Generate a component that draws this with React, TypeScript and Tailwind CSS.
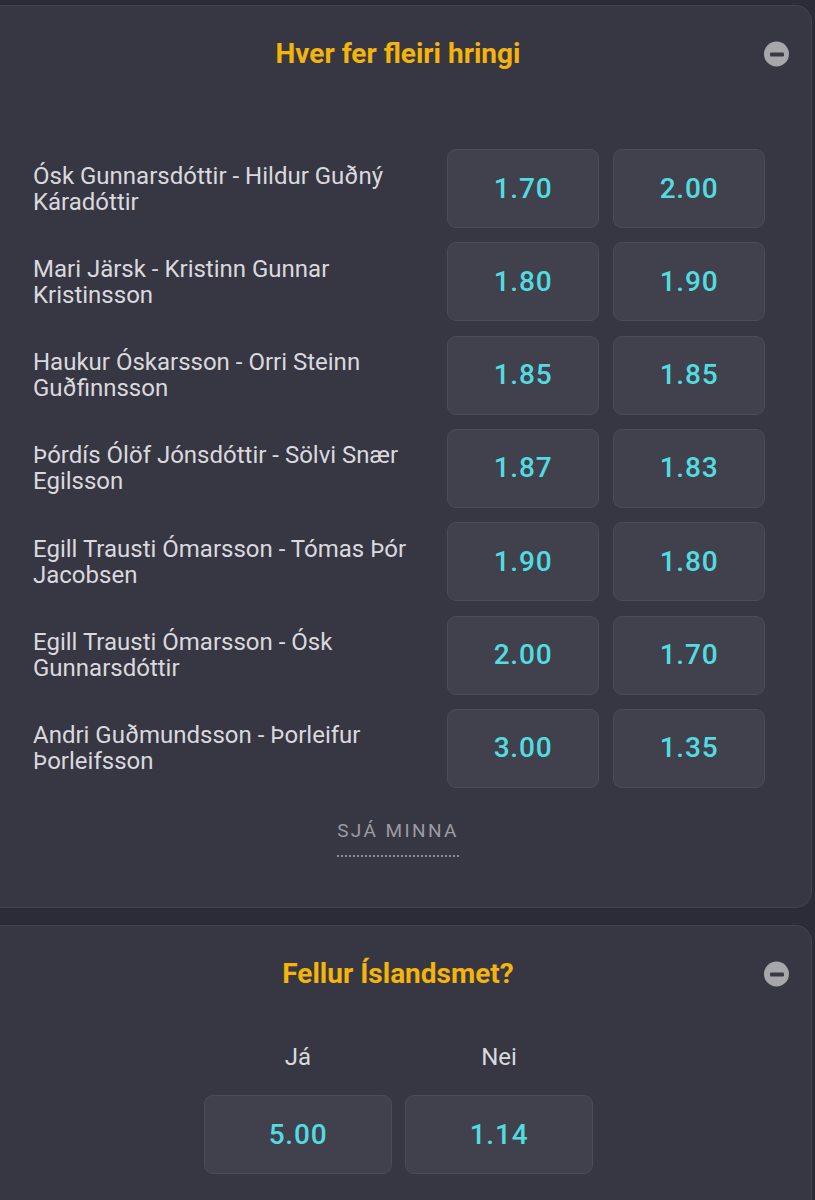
import React from "react";

const rows: [string, string, string][] = [
  ["Ósk Gunnarsdóttir - Hildur Guðný Káradóttir", "1.70", "2.00"],
  ["Mari Järsk - Kristinn Gunnar Kristinsson", "1.80", "1.90"],
  ["Haukur Óskarsson - Orri Steinn Guðfinnsson", "1.85", "1.85"],
  ["Þórdís Ólöf Jónsdóttir - Sölvi Snær Egilsson", "1.87", "1.83"],
  ["Egill Trausti Ómarsson - Tómas Þór Jacobsen", "1.90", "1.80"],
  ["Egill Trausti Ómarsson - Ósk Gunnarsdóttir", "2.00", "1.70"],
  ["Andri Guðmundsson - Þorleifur Þorleifsson", "3.00", "1.35"],
];

function MinusIcon() {
  return (
    <div className="absolute right-[22px] top-1/2 -translate-y-1/2 w-[25px] h-[25px] rounded-full bg-[#a6a6ab] flex items-center justify-center">
      <div className="w-[14px] h-[4px] rounded-[1px] bg-[#3a3a45]" />
    </div>
  );
}

function Odd({ v, w }: { v: string; w: string }) {
  return (
    <div
      className={`${w} h-[79px] rounded-[9px] bg-[#41414d] border border-[#4b4b59] flex items-center justify-center text-[#52dce0] text-[28px] font-medium tracking-[0.8px]`}
    >
      {v}
    </div>
  );
}

export default function App() {
  return (
    <div
      className="w-[815px] h-[1200px] overflow-hidden bg-[#2c2c38] pt-[5px]"
      style={{ fontFamily: "Roboto, 'Noto Sans', sans-serif" }}
    >
      {/* Card 1 */}
      <div className="ml-[-16px] w-[828px] h-[903px] rounded-[16px] bg-[#373743] border border-[#43434f] pt-[30px]">
        <div className="relative h-[36px] flex items-center justify-center">
          <div className="text-[#f4b40c] text-[28px] font-bold leading-[36px]">Hver fer fleiri hringi</div>
          <MinusIcon />
        </div>
        <div className="mt-[77px] flex flex-col gap-[14.33px] pl-[48px] pr-[46px]">
          {rows.map(([name, a, b], i) => (
            <div key={i} className="flex items-center h-[79px]">
              <div className="flex-1 pr-[14px] text-[#d9d9de] text-[24px] leading-[26px]">{name}</div>
              <div className="flex gap-[14px]">
                <Odd v={a} w="w-[152px]" />
                <Odd v={b} w="w-[152px]" />
              </div>
            </div>
          ))}
        </div>
        <div className="flex justify-center mt-[29px]">
          <div className="text-[#9b9ba3] text-[19px] tracking-[2.4px] leading-[28px] pb-[10px] border-b-2 border-dotted border-[#8e8e96]">
            SJÁ MINNA
          </div>
        </div>
      </div>

      {/* Card 2 */}
      <div className="mt-[17px] ml-[-16px] w-[828px] h-[400px] rounded-[16px] bg-[#373743] border border-[#43434f] pt-[30px]">
        <div className="relative h-[36px] flex items-center justify-center">
          <div className="text-[#f4b40c] text-[28px] font-bold leading-[36px]">Fellur Íslandsmet?</div>
          <MinusIcon />
        </div>
        <div className="mt-[50px] flex justify-center gap-[13px] pl-[1px]">
          <div className="flex flex-col items-center w-[188px]">
            <div className="text-[#d9d9de] text-[24px] leading-[30px] h-[30px]">Já</div>
            <div className="mt-[23px] w-full">
              <Odd v="5.00" w="w-full" />
            </div>
          </div>
          <div className="flex flex-col items-center w-[188px]">
            <div className="text-[#d9d9de] text-[24px] leading-[30px] h-[30px]">Nei</div>
            <div className="mt-[23px] w-full">
              <Odd v="1.14" w="w-full" />
            </div>
          </div>
        </div>
      </div>
    </div>
  );
}
